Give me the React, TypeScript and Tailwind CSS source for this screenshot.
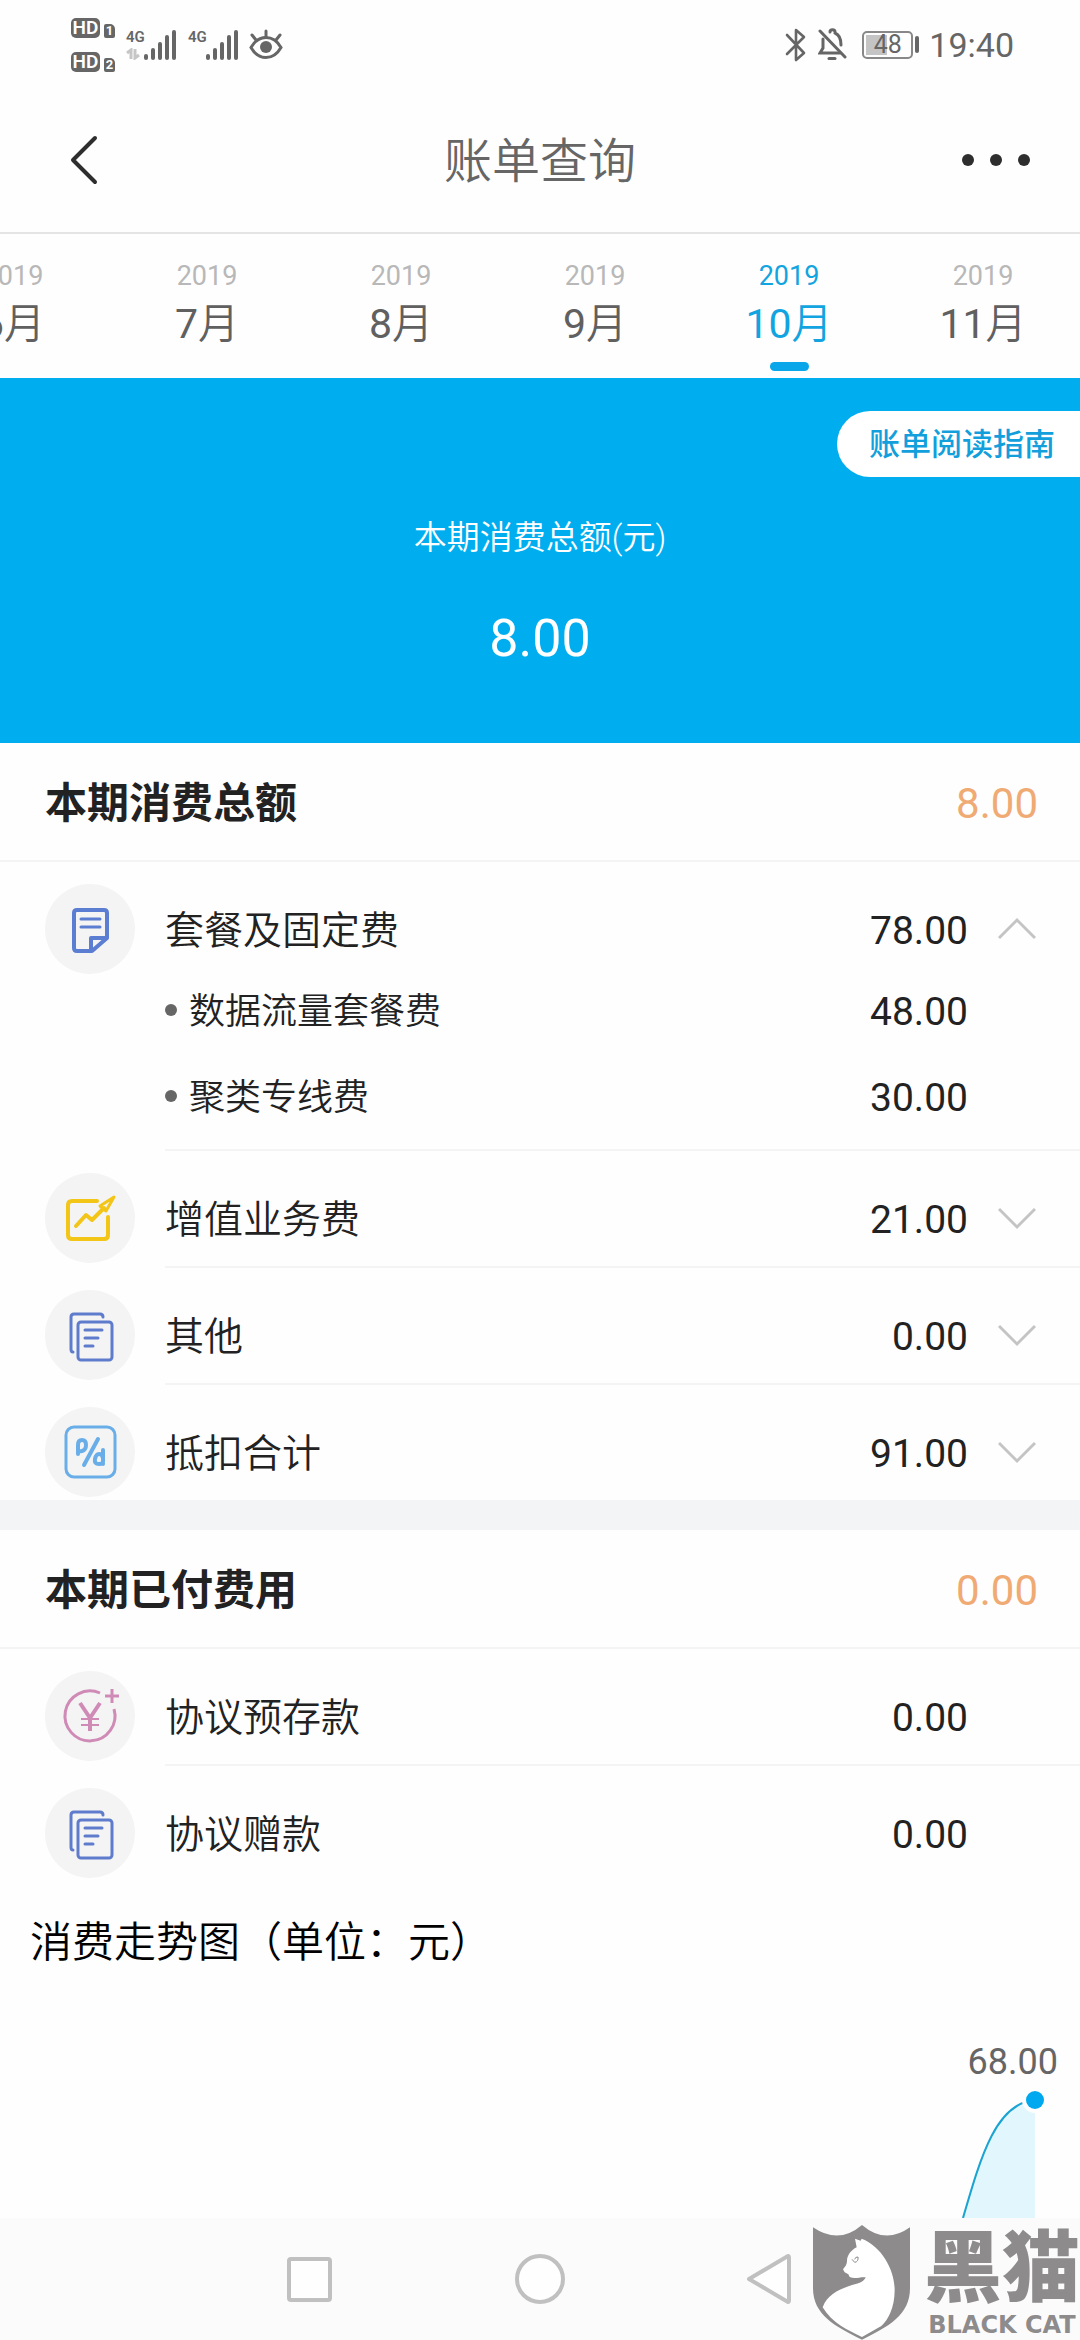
import { useState, type ReactNode } from "react";

const FONT = "font-[Roboto,'Noto_Sans_CJK_SC',sans-serif]";

function SignalBars() {
  return (
    <svg width="32" height="30" viewBox="0 0 32 30" fill="#666">
      <rect x="0" y="24" width="4" height="6" rx="2" />
      <rect x="7" y="18" width="4" height="12" rx="2" />
      <rect x="14" y="12" width="4" height="18" rx="2" />
      <rect x="21" y="5" width="4" height="25" rx="2" />
      <rect x="28" y="0" width="4" height="30" rx="2" />
    </svg>
  );
}

function HdBadge({ sim }: { sim: string }) {
  return (
    <div className="flex items-end gap-1">
      <span className="flex h-5 w-[29px] items-center justify-center rounded-[5px] bg-[#666] text-[19px] leading-none font-semibold text-white">
        HD
      </span>
      <span className="flex h-[14px] w-[11px] items-center justify-center rounded-xs rounded-tr-[5px] bg-[#666] text-[13px] leading-none font-bold text-white">
        {sim}
      </span>
    </div>
  );
}

function StatusBar() {
  return (
    <div className="flex h-[89px] items-center justify-between pr-[66px] pl-[71px] text-[#666]">
      <div className="flex items-center">
        <div className="flex flex-col gap-[14px]">
          <HdBadge sim="1" />
          <HdBadge sim="2" />
        </div>
        <div className="ml-[11px] flex h-[30px] items-end">
          <div className="flex h-[30px] w-[18px] flex-col justify-between">
            <span className="text-[15px] leading-[14px] font-semibold">4G</span>
            <svg width="14" height="12" viewBox="0 0 14 12" fill="none" stroke="#c6c6c6" strokeWidth="3">
              <path d="M1 5 5 2V11M9 1V10L13 7" />
            </svg>
          </div>
          <SignalBars />
        </div>
        <div className="ml-3 flex h-[30px] items-start">
          <span className="w-[18px] text-[15px] leading-[14px] font-semibold">4G</span>
          <SignalBars />
        </div>
        <svg className="ml-[11px]" width="34" height="31" viewBox="0 0 34 31" fill="none" stroke="#666" strokeWidth="3" strokeLinecap="round">
          <path d="M2 18.500C6 11.500 11 8.500 17 8.500S28 11.500 32 18.500C28 25.500 23 28.500 17 28.500S6 25.500 2 18.500Z" />
          <path d="M17 2V8M3 6 7 11M31 6 27 11" />
          <circle cx="17" cy="18" r="6" fill="#666" stroke="none" />
        </svg>
      </div>
      <div className="flex items-center">
        <svg width="21" height="34" viewBox="0 0 21 34" fill="none" stroke="#666" strokeWidth="2.600" strokeLinejoin="round" strokeLinecap="round">
          <path d="M2 7 19 25 11 32V2L19 9 2 26" />
        </svg>
        <svg className="ml-3" width="29" height="33" viewBox="0 0 29 33" fill="none" stroke="#666" strokeWidth="3" strokeLinecap="round">
          <path d="M2 3 27 29" />
          <path d="M12 4C12 1 17 1 17 4M17 5C22 7 23 11 23 17M5 11V20L2 25H22" />
          <path d="M11 30.500H17" />
        </svg>
        <div className="ml-[15px] flex items-center gap-[2px]">
          <div className="flex h-7 w-[51px] rounded-[5px] border-2 border-[#888] p-[2px]">
            <div className="flex grow items-center justify-center bg-linear-to-r from-[#c4c4c4] from-48% to-transparent to-48% text-[25px] leading-none">
              48
            </div>
          </div>
          <div className="h-[17px] w-1 rounded-sm bg-[#666]" />
        </div>
        <time className="ml-[10px] text-[34px] leading-10">19:40</time>
      </div>
    </div>
  );
}

function Header() {
  return (
    <header className="flex h-[145px] items-center justify-between border-b-2 border-[#e4e4e4] px-[50px] pb-[2px]">
      <button type="button" aria-label="返回" className="w-[68px] pl-5">
        <svg width="28" height="50" viewBox="0 0 28 50" fill="none" stroke="#2e2e2e" strokeWidth="4" strokeLinecap="round" strokeLinejoin="round">
          <path d="M25 3 3 25 25 47" />
        </svg>
      </button>
      <h1 className="pt-1 text-[48px] leading-[60px] font-[350] text-[#666]">账单查询</h1>
      <button type="button" aria-label="更多" className="flex gap-4">
        <span className="size-3 rounded-full bg-[#2e2e2e]" />
        <span className="size-3 rounded-full bg-[#2e2e2e]" />
        <span className="size-3 rounded-full bg-[#2e2e2e]" />
      </button>
    </header>
  );
}

const MONTHS = [6, 7, 8, 9, 10, 11];

function MonthTabs() {
  const [active, setActive] = useState(10);
  return (
    <div role="tablist" className="flex h-36 justify-end overflow-hidden">
      {MONTHS.map((month) => {
        const on = month === active;
        return (
          <button
            key={month}
            type="button"
            role="tab"
            aria-selected={on}
            onClick={() => setActive(month)}
            className="flex w-[194px] shrink-0 flex-col items-center pt-6"
          >
            <span className={`text-[27px] leading-9 ${on ? "text-[#12a4e0]" : "text-[#b8b8b8]"}`}>2019</span>
            <span className={`mt-1 text-[41px] leading-[52px] ${on ? "text-[#12a4e0]" : "text-[#606060]"}`}>
              {month}
              <span className="font-[350]">月</span>
            </span>
            {on && <span className="mt-3 h-[9px] w-[39px] rounded-full bg-[#0aa6ea]" />}
          </button>
        );
      })}
    </div>
  );
}

function Summary() {
  return (
    <section className="flex h-[365px] flex-col items-center bg-[#00aef0] pt-[33px] text-white">
      <a href="#guide" className="flex h-[66px] items-center self-end rounded-l-full bg-white pt-[2px] pr-[25px] pl-8 text-[31px] font-medium text-[#129fdc]">
        账单阅读指南
      </a>
      <p className="mt-[37px] text-[33px] leading-12 font-[350]">本期消费总额(元)</p>
      <p className="mt-11 text-[52px] leading-[66px]">8.00</p>
    </section>
  );
}

function NoteIcon() {
  return (
    <g stroke="#5b7dd2" strokeWidth="4">
      <path d="M62 54V29Q62 26 59 26H32Q29 26 29 29V64Q29 67 32 67H47ZM62 54H46V67" />
      <path d="M36 35H55M36 43H55" strokeWidth="3" />
    </g>
  );
}

function TrendIcon() {
  return (
    <g stroke="#f2c517" strokeWidth="4">
      <path d="M52 28H27Q23 28 23 32V62Q23 66 27 66H59Q63 66 63 62V44" />
      <path d="M31 53 41 42 47 47 59 35" />
      <path d="M69 24 55 33 61 38Z" strokeWidth="3" />
    </g>
  );
}

function DocsIcon() {
  return (
    <g stroke="#5f7ccc" strokeWidth="3">
      <rect x="33" y="32" width="34" height="38" rx="3" />
      <path d="M58 27Q58 24 55 24H29Q26 24 26 27V59Q26 62 28 62" />
      <path d="M40 40H57M40 48H53M40 56H48" />
    </g>
  );
}

function DiscountIcon() {
  return (
    <g stroke="#69aee8" strokeWidth="3">
      <rect x="21" y="20" width="49" height="50" rx="8" />
      <path d="M53 32 39 58" strokeWidth="4" />
      <path d="M33 47V38Q33 33 37 33T41 38 37 44 33 42" strokeWidth="4" />
      <path d="M58 43V57M58 51Q57 47 54 47T50 52 54 57 58 53" strokeWidth="4" />
    </g>
  );
}

function DepositIcon() {
  return (
    <g stroke="#cf8ab6" strokeWidth="4" strokeLinecap="butt">
      <path d="M55 22A25 25 0 1 0 69 38" strokeWidth="3" />
      <path d="M67 18V32M60 25H74" strokeWidth="3" />
      <path d="M35 32 45 47 55 32M45 47V60" />
      <path d="M36 48H54M36 54H54" strokeWidth="2" />
    </g>
  );
}

function CircleIcon({ children }: { children: ReactNode }) {
  return (
    <span className="size-[90px] shrink-0 rounded-full bg-[#f4f4f4]">
      <svg width="90" height="90" viewBox="0 0 90 90" fill="none" strokeLinecap="round" strokeLinejoin="round">
        {children}
      </svg>
    </span>
  );
}

type Item = { name: string; amount: string; icon: ReactNode; details?: { name: string; amount: string }[] };

const CHARGES: Item[] = [
  {
    name: "套餐及固定费",
    amount: "78.00",
    icon: <NoteIcon />,
    details: [
      { name: "数据流量套餐费", amount: "48.00" },
      { name: "聚类专线费", amount: "30.00" },
    ],
  },
  { name: "增值业务费", amount: "21.00", icon: <TrendIcon /> },
  { name: "其他", amount: "0.00", icon: <DocsIcon /> },
  { name: "抵扣合计", amount: "91.00", icon: <DiscountIcon /> },
];

const PAID: Item[] = [
  { name: "协议预存款", amount: "0.00", icon: <DepositIcon /> },
  { name: "协议赠款", amount: "0.00", icon: <DocsIcon /> },
];

function RowBody({ item }: { item: Item }) {
  return (
    <>
      <CircleIcon>{item.icon}</CircleIcon>
      <span className="ml-[30px] grow pt-1 text-left text-[39px] leading-[50px] font-[350]">{item.name}</span>
      <span className="pt-1 text-[39px] leading-[50px]">{item.amount}</span>
    </>
  );
}

function ChargeRow({ item, last, expandable }: { item: Item; last: boolean; expandable: boolean }) {
  const [open, setOpen] = useState(Boolean(item.details));
  return (
    <li className="pt-[22px]">
      {expandable ? (
        <button type="button" aria-expanded={open} onClick={() => setOpen(!open)} className="flex w-full items-center pr-11 pl-[45px]">
          <RowBody item={item} />
          <svg className={`ml-[30px] ${open ? "" : "rotate-180"}`} width="38" height="24" viewBox="0 0 38 24" fill="none" stroke="#c4c4c4" strokeWidth="3">
            <path d="M1 21 19 3 37 21" />
          </svg>
        </button>
      ) : (
        <div className="flex items-center pr-28 pl-[45px]">
          <RowBody item={item} />
        </div>
      )}
      {open && item.details && (
        <ul className="flex flex-col gap-9 pt-[13px] pr-28 pb-[23px] pl-[165px]">
          {item.details.map((detail) => (
            <li key={detail.name} className="flex items-center leading-[50px]">
              <span className="mb-1 size-3 rounded-full bg-[#666]" />
              <span className="ml-3 grow text-[36px] font-[350]">{detail.name}</span>
              <span className="text-[39px]">{detail.amount}</span>
            </li>
          ))}
        </ul>
      )}
      <div className={`mt-[3px] ml-[165px] bg-[#f4f4f4] ${last ? "h-0" : "h-[2px]"}`} />
    </li>
  );
}

function BillSection({ title, total, items, expandable }: { title: string; total: string; items: Item[]; expandable: boolean }) {
  return (
    <section className="text-[#222]">
      <div className="flex h-[119px] items-center justify-between border-b-2 border-[#f4f4f4] pt-1 pr-[42px] pl-[45px] text-[42px]">
        <h2 className="font-bold">{title}</h2>
        <span className="text-[#f0aa74]">{total}</span>
      </div>
      <ul>
        {items.map((item, i) => (
          <ChargeRow key={item.name} item={item} last={i === items.length - 1} expandable={expandable} />
        ))}
      </ul>
    </section>
  );
}

function TrendChart() {
  return (
    <section className="flex grow flex-col justify-between pt-8">
      <h2 className="pl-[30px] text-[42px] leading-[60px] font-[350] text-black">消费走势图（单位：元）</h2>
      <figure className="flex flex-col items-end pr-[22px]">
        <figcaption className="text-[36px] leading-[38px] text-[#666]">68.00</figcaption>
        <svg width="100" height="137" viewBox="0 0 100 137" fill="none">
          <path d="M5 137C23 75 38 22 77 19V137Z" fill="#e1f6fd" />
          <path d="M5 137C23 75 38 22 77 19" stroke="#1ba3d2" strokeWidth="2" />
          <circle cx="77" cy="19" r="13" fill="#fefefe" />
          <circle cx="77" cy="19" r="9" fill="#00a8f0" />
        </svg>
      </figure>
    </section>
  );
}

function NavBar() {
  return (
    <nav className="flex h-[122px] items-center justify-center gap-[181px] bg-[#fbfbfb]">
      <button type="button" aria-label="最近任务">
        <svg width="50" height="50" viewBox="0 0 50 50" fill="#fefefe" stroke="#c0c0c0" strokeWidth="4">
          <rect x="5" y="5" width="41" height="41" rx="2" />
        </svg>
      </button>
      <button type="button" aria-label="主屏幕">
        <svg width="50" height="50" viewBox="0 0 50 50" fill="#fefefe" stroke="#c0c0c0" strokeWidth="4">
          <circle cx="25" cy="25" r="23" />
        </svg>
      </button>
      <button type="button" aria-label="后退">
        <svg width="50" height="50" viewBox="0 0 50 50" fill="#fefefe" stroke="#c0c0c0" strokeWidth="4" strokeLinejoin="round">
          <path d="M3 25 42 2Q43 2 43 4V46Q43 48 42 48Z" />
        </svg>
      </button>
    </nav>
  );
}

function Watermark() {
  return (
    <div className="absolute right-0 bottom-0 flex h-[116px] items-start gap-3 text-[#8d8b8c]">
      <svg width="100" height="116" viewBox="90 732 300 348">
        <path fill="#8d8b8c" d="M93 742Q170 795 240 735Q310 795 384 742V925C384 1005 320 1040 240 1079C160 1040 93 1005 93 925Z" />
        <path fill="#fff" d="M219 776 236 782 239 776C300 800 338 870 338 930C338 985 318 1020 298 1038L240 1071C200 1052 150 1030 122 982C135 945 170 928 210 915C235 910 248 902 251 892C235 890 218 898 203 891L199 883 188 877 183 868C190 860 195 853 195 843C195 825 208 810 224 802Z" />
        <path fill="none" stroke="#8d8b8c" strokeWidth="3" d="M210 838 218 847Q230 845 228 831Q220 830 218 838" />
      </svg>
      <div className="flex flex-col items-center">
        <span className="text-[78px] leading-[92px] font-black">黑猫</span>
        <span className="font-['DejaVu_Sans',sans-serif] text-[24px] leading-[18px] font-bold">BLACK CAT</span>
      </div>
    </div>
  );
}

export default function App() {
  return (
    <div lang="zh-CN" className={`relative flex min-h-screen flex-col overflow-hidden bg-[#fefefe] ${FONT}`}>
      <StatusBar />
      <Header />
      <MonthTabs />
      <Summary />
      <BillSection title="本期消费总额" total="8.00" items={CHARGES} expandable />
      <div className="h-[30px] bg-[#f3f4f6]" />
      <BillSection title="本期已付费用" total="0.00" items={PAID} expandable={false} />
      <TrendChart />
      <NavBar />
      <Watermark />
    </div>
  );
}
